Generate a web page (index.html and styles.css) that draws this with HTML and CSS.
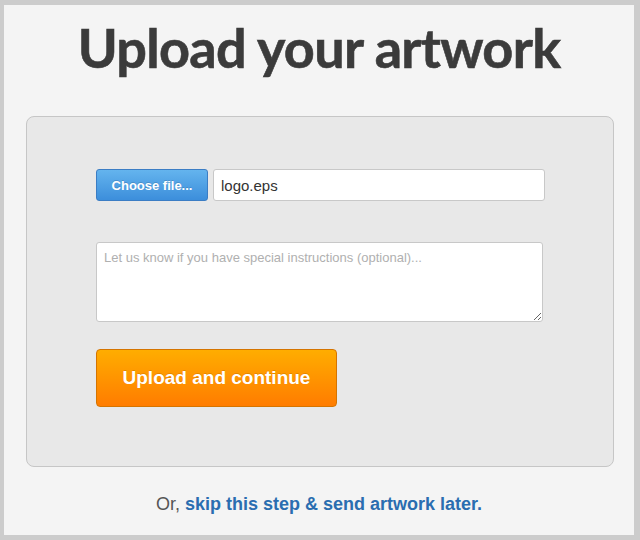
FILE: index.html
```html
<!DOCTYPE html>
<html>
<head>
<meta charset="utf-8">
<link rel="stylesheet" href="styles.css">
</head>
<body>
<div class="frame">
  <h1 class="title">Upload your artwork</h1>
  <div class="panel">
    <div class="file-row">
      <button class="choose-btn">Choose file...</button>
      <input class="file-name" type="text" value="logo.eps">
    </div>
    <textarea class="notes" placeholder="Let us know if you have special instructions (optional)..."></textarea>
    <button class="upload-btn">Upload and continue</button>
  </div>
  <p class="footer">Or, <a class="skip" href="#">skip this step &amp; send artwork later.</a></p>
</div>
</body>
</html>
```
FILE: styles.css
```css
html, body {
  margin: 0;
  padding: 0;
  background: #cccccc;
}
body {
  padding: 5px 6px 5px 4px;
  height: 540px;
  box-sizing: border-box;
}
.frame {
  background: #f4f4f4;
  height: 530px;
  display: flex;
  flex-direction: column;
  font-family: "Liberation Sans", Arial, sans-serif;
}
.title {
  margin: 8px 0 0 0;
  height: 103px;
  text-align: center;
  font-family: Lato, "Liberation Sans", sans-serif;
  font-weight: 700;
  font-size: 54px;
  letter-spacing: -0.7px;
  line-height: 70px;
  color: #3b3b3b;
  -webkit-text-stroke: 0.6px #3b3b3b;
}
.panel {
  margin: 0 20px 0 22px;
  height: 351px;
  box-sizing: border-box;
  background: #e8e8e8;
  border: 1px solid #c6c6c6;
  border-radius: 8px;
  padding: 52px 0 0 69px;
  display: flex;
  flex-direction: column;
  align-items: flex-start;
}
.file-row {
  display: flex;
  gap: 5px;
}
.choose-btn {
  width: 112px;
  height: 32px;
  box-sizing: border-box;
  border: 1px solid #3b7dc4;
  border-radius: 3px;
  background: linear-gradient(#64b4ee, #3c8edb);
  color: #ffffff;
  font-family: "Liberation Sans", Arial, sans-serif;
  font-weight: 700;
  font-size: 13px;
  padding: 0;
  text-shadow: 0 -1px 0 rgba(0,0,0,0.15);
}
.file-name {
  width: 332px;
  height: 32px;
  box-sizing: border-box;
  border: 1px solid #c8c8c8;
  border-radius: 3px;
  background: #ffffff;
  padding: 0 7px;
  font-family: "Liberation Sans", Arial, sans-serif;
  font-size: 15px;
  color: #333333;
  margin: 0;
}
.notes {
  margin-top: 41px;
  width: 447px;
  height: 80px;
  box-sizing: border-box;
  border: 1px solid #c8c8c8;
  border-radius: 3px;
  background: #ffffff;
  padding: 7px 7px;
  font-family: "Liberation Sans", Arial, sans-serif;
  font-size: 13px;
  color: #333;
  resize: vertical;
}
.notes::placeholder {
  color: #b0b0b0;
}
.upload-btn {
  margin-top: 27px;
  width: 241px;
  height: 58px;
  box-sizing: border-box;
  border: 1px solid #d57400;
  border-radius: 4px;
  background: linear-gradient(#ffad00, #ff7c00);
  color: #ffffff;
  font-family: "Liberation Sans", Arial, sans-serif;
  font-weight: 700;
  font-size: 19px;
  padding: 0;
  text-shadow: 0 -1px 0 rgba(0,0,0,0.12);
}
.footer {
  margin: 27px 0 0 0;
  text-align: center;
  font-size: 18px;
  line-height: 20px;
  color: #555555;
}
.skip {
  color: #2a6db0;
  font-weight: 700;
  text-decoration: none;
}
```
